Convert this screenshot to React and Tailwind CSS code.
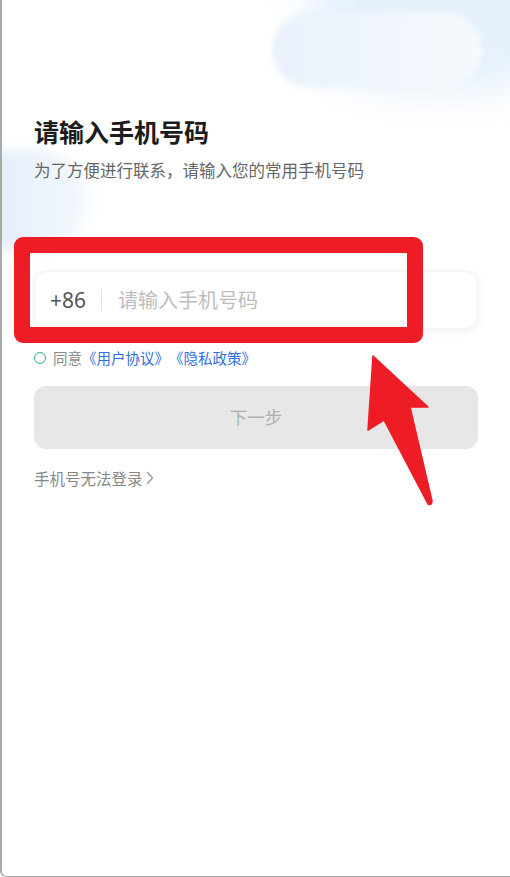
import React from "react";

export default function App() {
  const font = { fontFamily: '"Noto Sans CJK SC", "Noto Sans", sans-serif' };
  return (
    <div
      className="relative w-[510px] h-[877px] overflow-hidden bg-white border-l-2 border-b border-[#a9a9a9] rounded-bl-[6px]"
      style={font}
    >
      {/* decorative blobs */}
      <div className="absolute right-[-60px] top-[-70px] w-[260px] h-[160px] rounded-full bg-[#dfedfb] blur-[20px] opacity-80" />
      <div className="absolute left-[270px] top-[12px] w-[210px] h-[76px] rounded-full bg-gradient-to-r from-[#e9f1fb] to-[#f6fafe] blur-[3px]" />
      <div className="absolute left-[-72px] top-[150px] w-[160px] h-[100px] rounded-full bg-gradient-to-r from-[#d6e5f7] to-[#f4f8fd] blur-[6px] opacity-90" />

      <div className="relative flex flex-col pt-[115px] pl-[32px] pr-[32px]">
        <h1 className="text-[25px] leading-[32px] font-bold text-[#1c1c1c]">请输入手机号码</h1>
        <p className="mt-[11px] text-[16.5px] leading-[24px] text-[#666666]">
          为了方便进行联系，请输入您的常用手机号码
        </p>

        <div className="mt-[89px] h-[58px] flex items-center rounded-[12px] bg-white shadow-[0_2px_10px_rgba(0,0,0,0.06)] border border-[#f3f3f3]">
          <span className="pl-[15px] text-[21px] leading-none text-[#555555]" style={{ fontFamily: '"Noto Sans", "Noto Sans CJK SC", sans-serif' }}>+86</span>
          <span className="ml-[15px] w-px h-[22px] bg-[#e2e2e2]" />
          <span className="ml-[16px] text-[20px] leading-none text-[#bdbdbd]">请输入手机号码</span>
        </div>

        <div className="mt-[19px] h-[20px] flex items-center text-[14.5px] leading-[20px]">
          <span className="w-[12px] h-[12px] rounded-full border-[1.5px] border-[#2fb277]" />
          <span className="ml-[7px] text-[#8a8a8a]">同意</span>
          <span className="text-[#2f6fe0]">《用户协议》</span>
          <span className="text-[#2f6fe0]">《隐私政策》</span>
        </div>

        <div className="mt-[18px] h-[63px] flex items-center justify-center rounded-[12px] bg-[#e7e7e7]">
          <span className="text-[17.5px] text-[#b0b0b0]">下一步</span>
        </div>

        <div className="mt-[18px] flex items-center text-[15.5px] leading-[22px] text-[#888888]">
          <span>手机号无法登录</span>
          <svg className="ml-[3px]" width="8" height="14" viewBox="0 0 8 14" fill="none">
            <path d="M1.5 1.5 L6.5 7 L1.5 12.5" stroke="#999" strokeWidth="1.4" strokeLinecap="round" strokeLinejoin="round" />
          </svg>
        </div>
      </div>

      {/* red annotation rectangle */}
      <div className="absolute left-[12px] top-[237px] w-[409px] h-[106px] border-[16px] border-[#ee1d25] rounded-[9px]" />

      {/* red annotation arrow */}
      <svg className="absolute left-[-2px] top-0" width="510" height="877" viewBox="0 0 510 877">
        <path
          d="M373 356 L428 407 L410 407 L432 501 Q432 506 428 504 L384 420 L368 430 Z"
          fill="#ee1d25"
          stroke="#ee1d25"
          strokeWidth="1.5"
          strokeLinejoin="round"
        />
      </svg>
    </div>
  );
}
